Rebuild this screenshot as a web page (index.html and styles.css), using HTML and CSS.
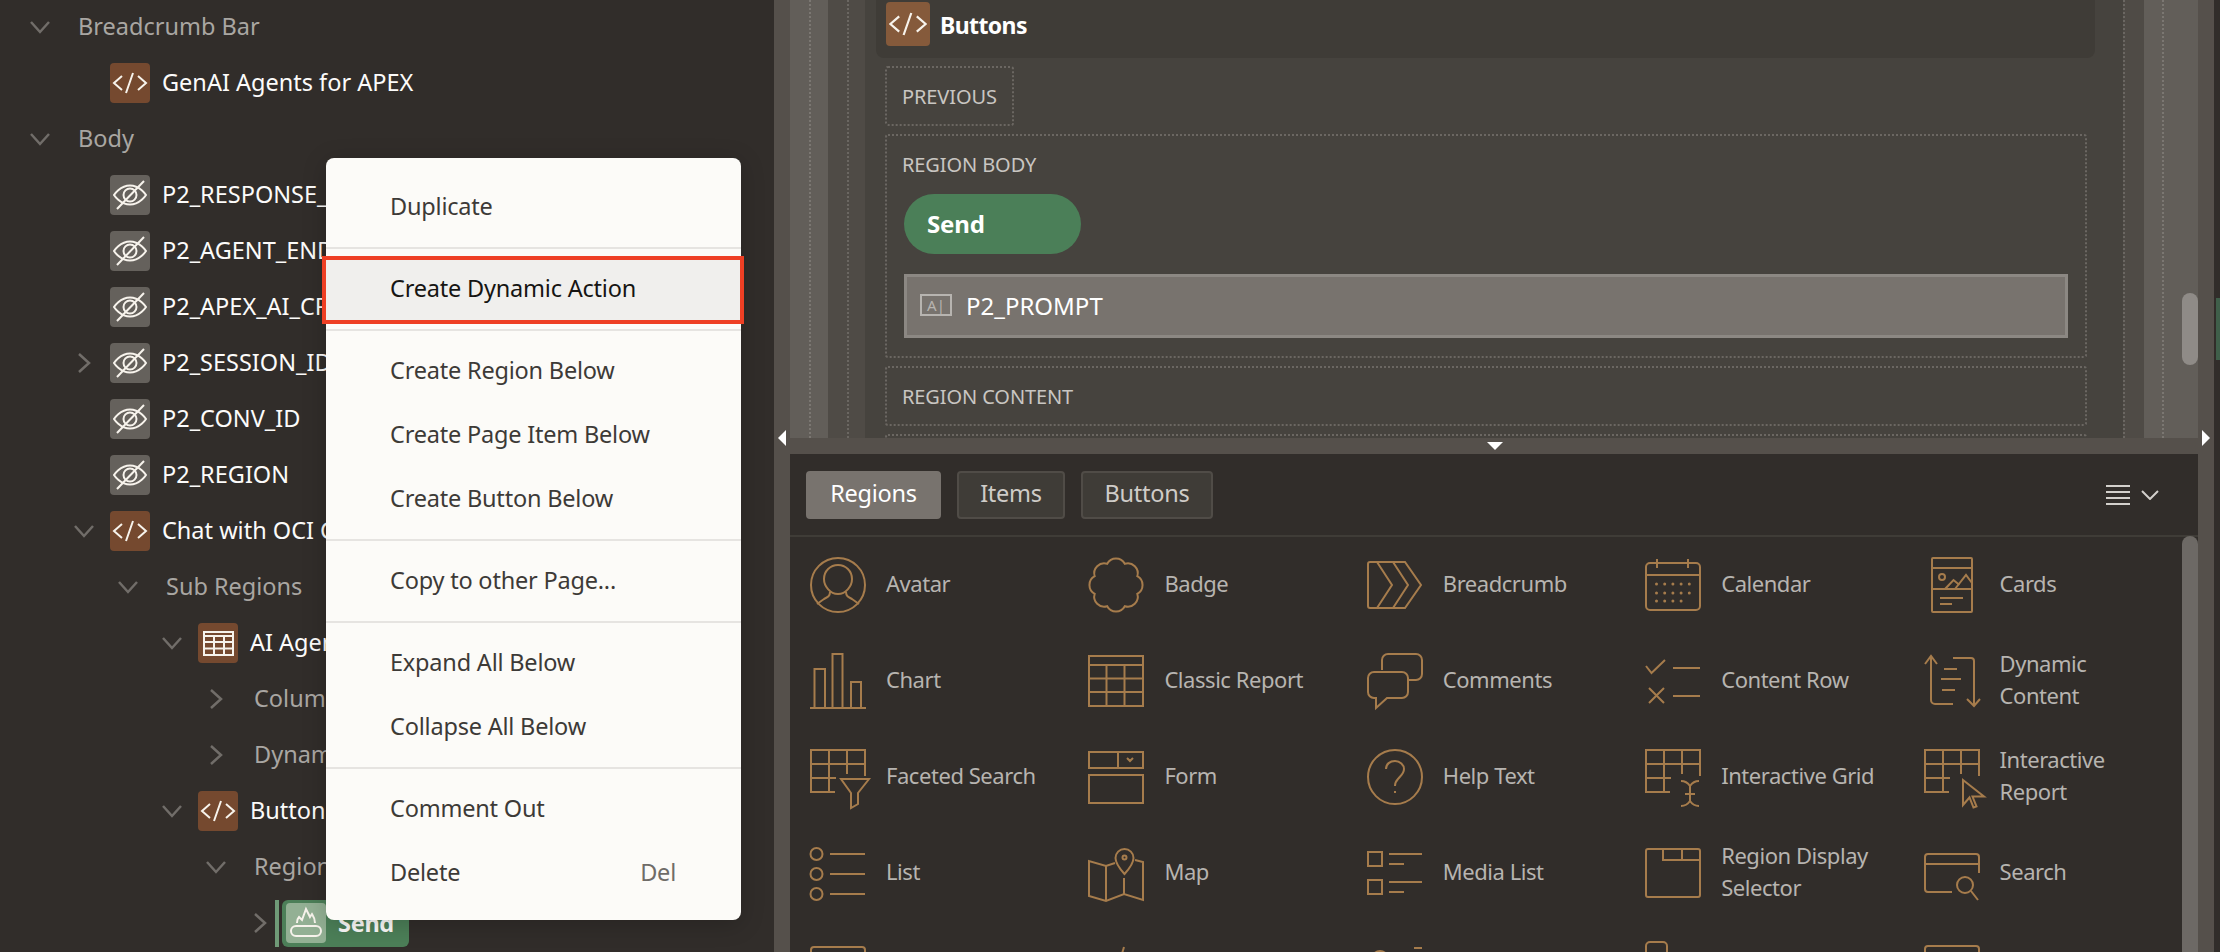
FILE: index.html
```html
<!DOCTYPE html>
<html lang="en">
<head>
    <meta charset="UTF-8">
    <title>Page Designer</title>
    <link rel="stylesheet" href="styles.css">
</head>
<body>
    <svg class="defs" width="0" height="0">
        <symbol id="chev-down" viewBox="0 0 28 28"><path d="M5 9l9 10 9-10"/></symbol>
        <symbol id="chev-right" viewBox="0 0 28 28"><path d="M9 5l10 9-10 9"/></symbol>
        <symbol id="ic-code" viewBox="0 0 40 40"><path d="M12 13l-8 7 8 7M28 13l8 7-8 7M16 30l7-20"/></symbol>
        <symbol id="ic-eye" viewBox="0 0 40 40"><path d="M4 20s6-9.500 16-9.500S36 20 36 20s-6 9.500-16 9.500S4 20 4 20z"/><circle cx="20" cy="20" r="6.500"/><path d="M7 34L34 6"/></symbol>
        <symbol id="ic-table" viewBox="0 0 40 40"><path d="M6 9h29v23H6zM6 13h29M6 19h29M6 25.500h29M16 13v19M26 13v19"/></symbol>
        <symbol id="ic-button" viewBox="0 0 40 40"><rect x="5" y="23" width="30" height="10" rx="5"/><path d="M11 20c0-4 2-6 2-6l3 3 4-11 4 8 2-3c2 3 3 6 3 9"/></symbol>
        <symbol id="ic-grid" viewBox="0 0 56 56"><path d="M25 43H1V1h54v26M1 15h54M1 29h25M19 1v42M37 1v24"/></symbol>
    </svg>

    <div class="app">
        <div class="tree">
            <div class="row level-0"><svg class="chev"><use href="#chev-down"/></svg><span class="group">Breadcrumb Bar</span></div>
            <div class="row level-1"><span class="chev"></span><svg class="node brown"><use href="#ic-code"/></svg><span class="name">GenAI Agents for APEX</span></div>
            <div class="row level-0"><svg class="chev"><use href="#chev-down"/></svg><span class="group">Body</span></div>
            <div class="row level-1"><span class="chev"></span><svg class="node grey"><use href="#ic-eye"/></svg><span class="name">P2_RESPONSE_ID</span></div>
            <div class="row level-1"><span class="chev"></span><svg class="node grey"><use href="#ic-eye"/></svg><span class="name">P2_AGENT_ENDPOINT</span></div>
            <div class="row level-1"><span class="chev"></span><svg class="node grey"><use href="#ic-eye"/></svg><span class="name">P2_APEX_AI_CRED</span></div>
            <div class="row level-1"><svg class="chev"><use href="#chev-right"/></svg><svg class="node grey"><use href="#ic-eye"/></svg><span class="name">P2_SESSION_ID</span></div>
            <div class="row level-1"><span class="chev"></span><svg class="node grey"><use href="#ic-eye"/></svg><span class="name">P2_CONV_ID</span></div>
            <div class="row level-1"><span class="chev"></span><svg class="node grey"><use href="#ic-eye"/></svg><span class="name">P2_REGION</span></div>
            <div class="row level-1"><svg class="chev"><use href="#chev-down"/></svg><svg class="node brown"><use href="#ic-code"/></svg><span class="name">Chat with OCI GenAI</span></div>
            <div class="row level-2"><svg class="chev"><use href="#chev-down"/></svg><span class="group">Sub Regions</span></div>
            <div class="row level-3"><svg class="chev"><use href="#chev-down"/></svg><svg class="node brown"><use href="#ic-table"/></svg><span class="name">AI Agents</span></div>
            <div class="row level-4"><svg class="chev"><use href="#chev-right"/></svg><span class="group">Columns</span></div>
            <div class="row level-4"><svg class="chev"><use href="#chev-right"/></svg><span class="group">Dynamic Actions</span></div>
            <div class="row level-3"><svg class="chev"><use href="#chev-down"/></svg><svg class="node brown"><use href="#ic-code"/></svg><span class="name">Buttons</span></div>
            <div class="row level-4"><svg class="chev"><use href="#chev-down"/></svg><span class="group">Region Body</span></div>
            <div class="row level-5">
                <svg class="chev"><use href="#chev-right"/></svg>
                <span class="selected"><svg class="node sage"><use href="#ic-button"/></svg><span class="name">Send</span></span>
            </div>
        </div>

        <div class="splitter-v">
            <span class="arrow arrow-left"></span>
        </div>

        <div class="main">
            <div class="canvas">
                <div class="lane-a"><div class="lane-b"><div class="lane-c"><div class="lane-d">
                    <div class="region-head">
                        <svg class="node-lg"><use href="#ic-code"/></svg>
                        <span class="region-title">Buttons</span>
                    </div>
                    <div class="slots">
                        <div class="slot slot-small">PREVIOUS</div>
                        <div class="slot slot-body">
                            <div class="slot-label">REGION BODY</div>
                            <div class="btn-send">Send</div>
                            <div class="item-prompt"><span class="item-icon">A|</span>P2_PROMPT</div>
                        </div>
                        <div class="slot">REGION CONTENT</div>
                        <div class="slot"></div>
                    </div>
                </div></div></div></div>
                <span class="scroll-thumb"></span>
            </div>

            <div class="splitter-h"><span class="arrow arrow-down"></span></div>

            <div class="gallery">
                <div class="gallery-bar">
                    <div class="tabs">
                        <span class="tab active tab-regions">Regions</span>
                        <span class="tab tab-items">Items</span>
                        <span class="tab tab-buttons">Buttons</span>
                    </div>
                    <div class="view-menu">
                        <span class="lines"></span>
                        <svg class="view-chev" viewBox="0 0 18 10"><path d="M1 1l8 8 8-8"/></svg>
                    </div>
                </div>
                <div class="grid">
                    <div class="cell"><svg viewBox="0 0 56 56"><circle cx="28" cy="28" r="27"/><path d="M28 8c7.700 0 14 6 14 14 0 7-6 15-14 15s-14-8-14-15c0-8 6.300-14 14-14zM20 35c0 4-2 5-6 7l-7 5M36 35c0 4 2 5 6 7l7 5"/></svg><span>Avatar</span></div>
                    <div class="cell"><svg viewBox="0 0 56 56"><path d="M49.300 19.200A10 10 0 0 1 49.300 36.800A10 10 0 0 1 36.800 49.300A10 10 0 0 1 19.200 49.300A10 10 0 0 1 6.700 36.800A10 10 0 0 1 6.700 19.200A10 10 0 0 1 19.200 6.700A10 10 0 0 1 36.800 6.700A10 10 0 0 1 49.300 19.200z"/></svg><span>Badge</span></div>
                    <div class="cell"><svg viewBox="0 0 56 56"><path d="M3 5h35l16 23-16 23H3a2 2 0 0 1-2-2V7a2 2 0 0 1 2-2zM10 5l15 23-15 23M26 5l15 23-15 23"/></svg><span>Breadcrumb</span></div>
                    <div class="cell"><svg viewBox="0 0 56 56"><rect x="1" y="6" width="54" height="47" rx="4"/><path d="M1 18h54M12 2v9M43 2v9"/><path class="dots" d="M11.500 27h33M11.500 36h33M11.500 44h25"/></svg><span>Calendar</span></div>
                    <div class="cell"><svg viewBox="0 0 56 56"><rect x="8" y="1" width="40" height="54" rx="1"/><path d="M8 11h40M8 32h40M21 32l8.500-9 6 5M31 32l11-14 6 8M16 41h23M16 47h12"/><circle cx="18" cy="20" r="3"/></svg><span>Cards</span></div>

                    <div class="cell"><svg viewBox="0 0 56 56"><path d="M0 55h56M4.500 55V16H15v39M22.500 55V1h10v54M41 55V29h10v26"/></svg><span>Chart</span></div>
                    <div class="cell"><svg viewBox="0 0 56 56"><path d="M1 3h54v50H1zM1 12h54M1 25.500h54M1 39h54M18.500 12v41M36.500 12v41"/></svg><span>Classic Report</span></div>
                    <div class="cell"><svg viewBox="0 0 56 56"><path d="M15 17V7a6 6 0 0 1 6-6h28a6 6 0 0 1 6 6v14a6 6 0 0 1-6 6h-7M7 19h28a6 6 0 0 1 6 6v14a6 6 0 0 1-6 6H20L9 55V45H7a6 6 0 0 1-6-6V25a6 6 0 0 1 6-6z"/></svg><span>Comments</span></div>
                    <div class="cell"><svg viewBox="0 0 56 56"><path d="M1 13l5.500 7L20 7M28 15h27M4 35l15 15M19 35L4 50M28 43h27"/></svg><span>Content Row</span></div>
                    <div class="cell"><svg viewBox="0 0 56 56"><path d="M1 11l6-8 6 8M7 3v44a4 4 0 0 0 4 4h18M29 5h18a3 3 0 0 1 3 3v45M43 46l7 7 6-7M20 16h13M17 26h20M18 37h13"/></svg><span>Dynamic<br>Content</span></div>

                    <div class="cell"><svg viewBox="0 0 56 56"><use class="plain" href="#ic-grid"/><path d="M31 30h28l-11 14v11l-7 4V44z"/></svg><span>Faceted Search</span></div>
                    <div class="cell"><svg viewBox="0 0 56 56"><path d="M1 3h54v16H1zM30 3v16M39 9l3 3 3-3M1 26h54v28H1z"/></svg><span>Form</span></div>
                    <div class="cell"><svg viewBox="0 0 56 56"><circle cx="28" cy="28" r="27"/><path d="M19 20c0-5 4-8 9-8s9 4 9 8c0 5-4 7-6 10-2 2-3 4-3 7M28 42v2"/></svg><span>Help Text</span></div>
                    <div class="cell"><svg viewBox="0 0 56 56"><use class="plain" href="#ic-grid"/><path d="M36 32c4 0 7 2 9 5 2-3 5-5 9-5M45 37v15M40 45h10M36 57c4 0 7-2 9-5 2 3 5 5 9 5"/></svg><span>Interactive Grid</span></div>
                    <div class="cell"><svg viewBox="0 0 56 56"><use class="plain" href="#ic-grid"/><path d="M39 31v25l6.500-7.500 4 10 3-1-4-10H60z"/></svg><span>Interactive<br>Report</span></div>

                    <div class="cell"><svg viewBox="0 0 56 56"><circle cx="6.500" cy="9" r="6"/><circle cx="6.500" cy="29" r="6"/><circle cx="6.500" cy="49" r="6"/><path d="M20 9h35M20 29h35M20 49h35"/></svg><span>List</span></div>
                    <div class="cell"><svg viewBox="0 0 56 56"><path d="M27 18l-9 3-17-5v35l17 5 18-7 19 6V17l-8-2M18 21v35M36 33v16M36.500 4c-5 0-9 4-9 9 0 6 9 16 9 16s9-10 9-16c0-5-4-9-9-9z"/><circle cx="36.500" cy="12.500" r="2"/></svg><span>Map</span></div>
                    <div class="cell"><svg viewBox="0 0 56 56"><path d="M1 7h14v14H1zM1 35h14v14H1zM22 9h33M22 19h15M22 37h33M22 47h15"/></svg><span>Media List</span></div>
                    <div class="cell"><svg viewBox="0 0 56 56"><rect x="1" y="4" width="54" height="48" rx="2"/><path d="M18 4v11h37M37 4v11"/></svg><span>Region Display<br>Selector</span></div>
                    <div class="cell"><svg viewBox="0 0 56 56"><path d="M55 28V12a3 3 0 0 0-3-3H4a3 3 0 0 0-3 3v32a3 3 0 0 0 3 3h24M1 19h54M47 46l7 9"/><circle cx="41" cy="40" r="8"/></svg><span>Search</span></div>

                    <div class="cell"><svg viewBox="0 0 56 56"><rect x="1" y="6" width="54" height="48" rx="3"/></svg></div>
                    <div class="cell"><svg viewBox="0 0 56 56"><path d="M36 6l-3 10"/></svg></div>
                    <div class="cell"><svg viewBox="0 0 56 56"><circle cx="13" cy="18" r="8"/><path d="M47 7h8"/></svg></div>
                    <div class="cell"><svg viewBox="0 0 56 56"><rect x="1" y="1" width="21" height="21" rx="4"/></svg></div>
                    <div class="cell"><svg viewBox="0 0 56 56"><rect x="1" y="5" width="54" height="48" rx="3"/></svg></div>
                </div>
                <span class="scroll-thumb gallery-thumb"></span>
            </div>
        </div>

        <div class="splitter-v">
            <span class="arrow arrow-right"></span>
        </div>
        <div class="edge"><span class="edge-mark"></span></div>
    </div>

    <div class="menu">
        <div class="menu-item">Duplicate</div>
        <div class="menu-sep"></div>
        <div class="menu-item hot">Create Dynamic Action</div>
        <div class="menu-sep"></div>
        <div class="menu-item">Create Region Below</div>
        <div class="menu-item">Create Page Item Below</div>
        <div class="menu-item">Create Button Below</div>
        <div class="menu-sep"></div>
        <div class="menu-item">Copy to other Page...</div>
        <div class="menu-sep"></div>
        <div class="menu-item">Expand All Below</div>
        <div class="menu-item">Collapse All Below</div>
        <div class="menu-sep"></div>
        <div class="menu-item">Comment Out</div>
        <div class="menu-item">Delete<span class="shortcut">Del</span></div>
    </div>
</body>
</html>
```

FILE: styles.css
```css
* {
    box-sizing: border-box;
}
html, body {
    margin: 0;
    height: 100%;
    overflow: hidden;
}
body {
    position: relative;
    font-family: "Noto Sans", "Open Sans", sans-serif;
    font-size: 23.5px;
    background-color: #312d2a;
}
.defs {
    position: absolute;
}
.app {
    display: flex;
    width: 2220px;
    height: 952px;
    overflow: hidden;
}

/* left tree */
.tree {
    width: 774px;
    flex-shrink: 0;
    margin-top: -1px;
    background-color: #312d2a;
}
.row {
    display: flex;
    align-items: center;
    height: 56px;
    white-space: nowrap;
}
.level-0 { padding-left: 26px; }
.level-1 { padding-left: 70px; }
.level-2 { padding-left: 114px; }
.level-3 { padding-left: 158px; }
.level-4 { padding-left: 202px; }
.level-5 { padding-left: 246px; }
.chev {
    width: 28px;
    height: 28px;
    margin-right: 12px;
    flex-shrink: 0;
    fill: none;
    stroke: #716d69;
    stroke-width: 2.5;
}
.group {
    margin-left: 12px;
    padding-bottom: 3px;
    color: #a9a6a2;
}
.name {
    padding-bottom: 3px;
    color: #fcfbfa;
}
.node {
    width: 40px;
    height: 40px;
    margin-right: 12px;
    flex-shrink: 0;
    border-radius: 4px;
    fill: none;
    stroke: #f7f3ec;
    stroke-width: 2;
}
.brown { background-color: #75492f; }
.grey { background-color: #65615c; }
.sage { background-color: #93b094; }
.selected {
    position: relative;
    display: flex;
    align-items: center;
    height: 47px;
    margin-left: -4px;
    padding: 0 15px 0 4px;
    border-radius: 6px;
    background-color: #4c7f58;
    font-weight: 700;
    letter-spacing: -0.3px;
}
.selected .name {
    padding-bottom: 0;
}
.selected::before {
    content: "";
    position: absolute;
    left: -7px;
    top: 0;
    bottom: 0;
    width: 4px;
    background-color: #6f9a77;
}

/* splitters */
.splitter-v {
    position: relative;
    width: 16px;
    flex-shrink: 0;
    background-color: #55504b;
}
.splitter-h {
    position: relative;
    height: 16px;
    background-color: #55504b;
}
.arrow {
    position: absolute;
    width: 0;
    height: 0;
    border-style: solid;
    border-color: transparent;
}
.arrow-left {
    left: 4px;
    top: 430px;
    border-width: 8px 8px 8px 0;
    border-right-color: #fff;
}
.arrow-right {
    left: 4px;
    top: 430px;
    border-width: 8px 0 8px 8px;
    border-left-color: #fff;
}
.arrow-down {
    left: 697px;
    top: 4px;
    border-width: 8px 8px 0 8px;
    border-top-color: #fff;
}
.edge {
    position: relative;
    width: 6px;
    flex-shrink: 0;
    background-color: #312d2a;
}
.edge-mark {
    position: absolute;
    left: 2px;
    right: 0;
    top: 298px;
    height: 62px;
    background-color: #3f5f4a;
}

/* top canvas */
.main {
    display: flex;
    flex-direction: column;
    width: 1408px;
    flex-shrink: 0;
}
.canvas {
    position: relative;
    height: 438px;
    padding: 0 34px 0 19px;
    overflow: hidden;
    background-color: #625e59;
}
.lane-a {
    height: 100%;
    padding: 0 18px 0 17px;
    border-left: 2px dotted #7b7772;
    border-right: 2px dotted #7b7772;
}
.lane-b {
    height: 100%;
    padding: 0 19px;
    background-color: #4f4b46;
}
.lane-c {
    height: 100%;
    padding: 0 0 0 16px;
    border-left: 2px dotted #6b6762;
    border-right: 2px dotted #6b6762;
}
.lane-d {
    height: 100%;
    padding: 0 28px 0 11px;
    background-color: #46433e;
}
.region-head {
    display: flex;
    align-items: center;
    height: 58px;
    padding: 0 10px 10px;
    border-radius: 0 0 8px 8px;
    background-color: #3f3c37;
}
.node-lg {
    width: 44px;
    height: 44px;
    margin-right: 10px;
    border-radius: 4px;
    background-color: #855a3b;
    fill: none;
    stroke: #f7f3ec;
    stroke-width: 2;
}
.region-title {
    padding-top: 1px;
    color: #fff;
    font-weight: 700;
    font-size: 23px;
    letter-spacing: -0.6px;
}
.slots {
    display: flex;
    flex-direction: column;
    gap: 8px;
    margin: 8px 8px 0 9px;
}
.slot {
    flex-shrink: 0;
    display: flex;
    align-items: center;
    height: 60px;
    padding: 0 15px 0 15px;
    border: 2px dotted #6b6762;
    border-radius: 3px;
    color: #c9c6c2;
    font-size: 20px;
    letter-spacing: -0.1px;
}
.slot-small {
    width: 129px;
}
.slot-body {
    display: block;
    height: 224px;
    padding: 15px 17px 0 17px;
}
.slot-label {
    height: 43px;
    margin-left: -2px;
    line-height: 28px;
}
.btn-send {
    width: 177px;
    height: 60px;
    padding-left: 23px;
    border-radius: 30px;
    background-color: #4b7f58;
    color: #fff;
    font-size: 24px;
    font-weight: 700;
    line-height: 60px;
}
.item-prompt {
    display: flex;
    align-items: center;
    height: 64px;
    margin-top: 20px;
    padding: 0 0 2px 13px;
    border: 3px solid #8c8883;
    background-color: #78736e;
    color: #fff;
    font-size: 24px;
    letter-spacing: 0;
}
.item-icon {
    width: 32px;
    height: 22px;
    margin-right: 14px;
    border: 2px solid #b7b4b0;
    color: #b7b4b0;
    font-size: 15px;
    line-height: 18px;
    text-align: center;
}
.scroll-thumb {
    position: absolute;
    right: 0;
    top: 293px;
    width: 16px;
    height: 72px;
    border-radius: 8px;
    background-color: #8f8b87;
}

/* component gallery */
.gallery {
    position: relative;
    flex: 1;
    overflow: hidden;
    background-color: #312d2a;
}
.gallery-bar {
    display: flex;
    justify-content: space-between;
    align-items: center;
    height: 83px;
    padding: 0 39px 0 16px;
    border-bottom: 2px solid #3f3c37;
}
.tabs {
    display: flex;
    gap: 16px;
}
.tab {
    height: 48px;
    border: 2px solid #504c47;
    border-radius: 4px;
    background-color: #3f3c37;
    color: #cfccc8;
    letter-spacing: -0.25px;
    line-height: 41px;
    text-align: center;
}
.tab-regions { width: 135px; }
.tab-items { width: 108px; }
.tab-buttons { width: 132px; }
.tab.active {
    border-color: #78736e;
    background-color: #78736e;
    color: #fff;
}
.view-menu {
    display: flex;
    align-items: center;
    gap: 11px;
}
.lines {
    width: 24px;
    height: 20px;
    border-top: 2px solid #d3d0cc;
    border-bottom: 2px solid #d3d0cc;
    background: linear-gradient(#d3d0cc, #d3d0cc) 0 4px / 100% 2px no-repeat,
                linear-gradient(#d3d0cc, #d3d0cc) 0 10px / 100% 2px no-repeat;
}
.view-chev {
    width: 18px;
    height: 10px;
    fill: none;
    stroke: #d3d0cc;
    stroke-width: 2;
}
.grid {
    display: grid;
    grid-template-columns: repeat(5, 278.4px);
    grid-auto-rows: 96px;
    padding-left: 20px;
}
.cell {
    display: flex;
    align-items: center;
    gap: 20px;
    color: #b7b4b0;
    font-size: 22px;
    letter-spacing: -0.45px;
    line-height: 32px;
}
.cell span {
    padding-bottom: 4px;
}
.cell svg {
    width: 56px;
    height: 56px;
    flex-shrink: 0;
    overflow: visible;
    fill: none;
    stroke: #a67c4c;
    stroke-width: 2;
}
.cell .dots {
    stroke-width: 3;
    stroke-linecap: round;
    stroke-dasharray: 0 8.2;
}
.gallery-thumb {
    top: 82px;
    height: 500px;
    background-color: #6d6965;
}

/* context menu */
.menu {
    position: absolute;
    left: 326px;
    top: 158px;
    width: 415px;
    padding: 17px 0 15px;
    border-radius: 8px;
    background-color: #fcfbf8;
    box-shadow: 0 4px 24px rgba(0, 0, 0, 0.2);
    color: #3d3a37;
}
.menu-item {
    position: relative;
    display: flex;
    justify-content: space-between;
    align-items: center;
    height: 64px;
    padding: 0 65px 2px 64px;
    letter-spacing: -0.2px;
}
.menu-item.hot {
    background-color: #f0efed;
    color: #161513;
}
.menu-item.hot::after {
    content: "";
    position: absolute;
    left: -4px;
    right: -3px;
    top: -1px;
    bottom: -3px;
    border: 4px solid #ee3f24;
}
.menu-sep {
    height: 2px;
    margin: 8px 0;
    background-color: #e6e4e1;
}
.shortcut {
    color: #6f6c68;
}
```
